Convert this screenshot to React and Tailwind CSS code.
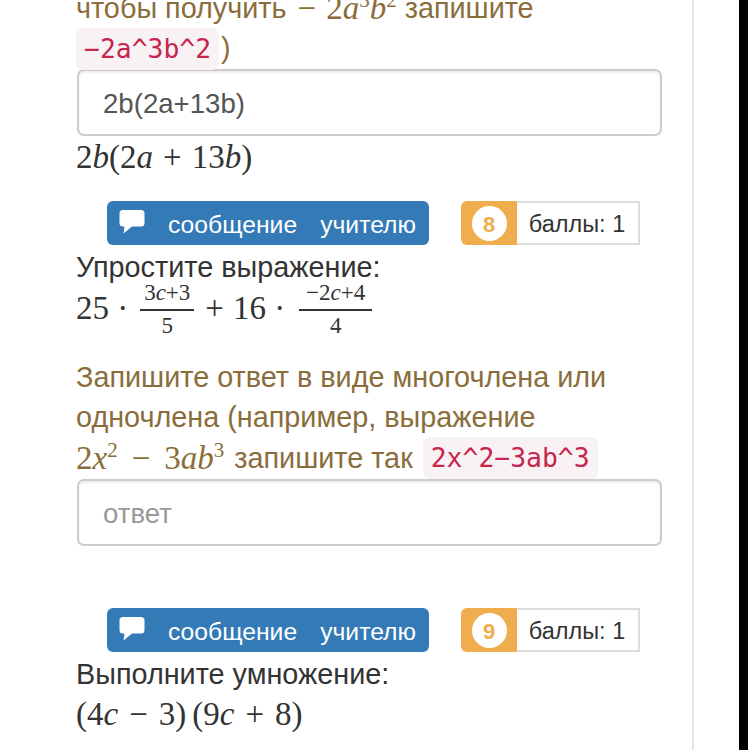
import React from "react";

const serif = "font-['Liberation_Serif',serif]";

const V = ({ children }) => <i className="italic">{children}</i>;

const Code = ({ children }) => (
  <code className="inline-block h-[42px] rounded-[7px] bg-[#f9f2f4] px-[8px] font-['DejaVu_Sans_Mono',monospace] text-[26.4px] leading-[42px] text-[#c7254e]">
    {children}
  </code>
);

const Sup = ({ children }) => (
  <sup className="relative -top-[12px] align-baseline text-[21px] leading-none">{children}</sup>
);

const Frac = ({ top, bottom, width, left }) => (
  <span className={`inline-flex flex-col items-center align-middle text-[23px] leading-[25px] ${width} ${left}`}>
    <span className="w-full whitespace-nowrap border-b-2 border-[#333] pb-[4px] text-center">{top}</span>
    <span className="pt-[2px] text-center">{bottom}</span>
  </span>
);

const AnswerInput = ({ value }) => (
  <input
    readOnly
    value={value}
    placeholder="ответ"
    className="ml-[1px] block h-[67px] w-[585px] rounded-[7px] border-2 border-[#ccc] bg-white px-[24px] pt-[3px] text-[27.6px] text-[#555] shadow-[inset_0_2px_2px_rgba(0,0,0,0.075)] outline-none placeholder:text-[#999]"
  />
);

const CommentIcon = () => (
  <svg width="26" height="24" viewBox="0 0 26 24" className="shrink-0">
    <path
      d="M4 0h18a3.5 3.5 0 0 1 3.5 3.5v9.5a3.5 3.5 0 0 1-3.5 3.5H13L4.5 23.5 5.5 16.5H4A3.5 3.5 0 0 1 .5 13V3.5A3.5 3.5 0 0 1 4 0z"
      fill="#fff"
    />
  </svg>
);

const ActionRow = ({ num }) => (
  <div className="flex h-[44px] pl-[31px]">
    <button className="flex h-[44px] w-[322px] items-start rounded-[6px] bg-[#337ab7] pl-[12px] pt-[9px] text-[#fff]">
      <CommentIcon />
      <span className="ml-[23px] whitespace-pre text-[24.7px] leading-[30px]">сообщение<span className="ml-[23px]">учителю</span></span>
    </button>
    <div className="ml-[32px] flex h-[44px] items-stretch">
      <div className="flex w-[56px] items-center justify-center rounded-l-[6px] bg-[#f0ad4e]">
        <span className="mt-[1px] flex h-[35px] w-[35px] items-center justify-center rounded-full bg-white pt-[1px] text-[22px] font-bold text-[#f0ad4e]">
          {num}
        </span>
      </div>
      <div className="flex w-[123px] items-center justify-center border-2 border-l-0 border-[#ddd] bg-white pr-[1px] pt-[3px] text-[23.5px] text-[#333]">
        баллы: 1
      </div>
    </div>
  </div>
);

export default function App() {
  return (
    <div className="flex h-[750px] w-[748px] overflow-hidden bg-white font-['Liberation_Sans',sans-serif] text-[28.8px] text-[#333]">
      <div className="h-full w-[694px] shrink-0 border-r-2 border-[#e4e4e4] pl-[76px]">
        <div className="-mt-[12px] leading-[40px] text-[#8a6d3b]">
          <div className="flex h-[40px] whitespace-pre">
            <span>чтобы получить </span>
            <span className={`${serif} text-[33px]`}>
              <span className="ml-[3px] mr-[10px]">−</span>2<V>a</V>
              <Sup>3</Sup>
              <V>b</V>
              <Sup>2</Sup>
            </span>
            <span> запишите</span>
          </div>
          <div className="flex h-[41px] items-start">
            <Code>−2a^3b^2</Code>
            <span className="ml-[2px]">)</span>
          </div>
        </div>
        <AnswerInput value="2b(2a+13b)" />
        <div className={`${serif} h-[43px] text-[33px] leading-[43px]`}>
          2<V>b</V>(2<V>a</V>
          <span className="mx-[10px]">+</span>13<V>b</V>)
        </div>
        <div className="mt-[22px]">
          <ActionRow num="8" />
        </div>
        <div className="h-[44px] leading-[44px]">Упростите выражение:</div>
        <div className={`${serif} -mt-[5px] flex h-[50px] items-center text-[33px] text-[#333]`}>
          25 ·
          <Frac
            width="w-[54px]"
            left="ml-[12px] mr-[11px]"
            top={
              <>
                3<V>c</V>+3
              </>
            }
            bottom="5"
          />
          <span className="mr-[9px]">+</span> 16 ·
          <Frac
            width="w-[73px]"
            left="ml-[14px]"
            top={
              <>
                −2<V>c</V>+4
              </>
            }
            bottom="4"
          />
        </div>
        <div className="mt-[23px] leading-[40px] text-[#8a6d3b]">
          <div className="h-[40px] whitespace-nowrap">Запишите ответ в виде многочлена или</div>
          <div className="h-[40px] whitespace-nowrap">одночлена (например, выражение</div>
          <div className="flex h-[42px] items-center whitespace-pre">
            <span className={`${serif} text-[33px]`}>
              2<V>x</V>
              <Sup>2</Sup>
              <span className="mx-[14px]">−</span>3<V>ab</V>
              <Sup>3</Sup>
            </span>
            <span className="ml-[10px] mr-[10px]">запишите так</span>
            <Code>2x^2−3ab^3</Code>
          </div>
        </div>
        <AnswerInput value="" />
        <div className="mt-[62px]">
          <ActionRow num="9" />
        </div>
        <div className="h-[44px] leading-[44px]">Выполните умножение:</div>
        <div className={`${serif} h-[36px] whitespace-pre text-[33px] leading-[36px]`}>
          (4<V>c</V>
          <span className="mx-[11px]">−</span>3)
          <span className="ml-[6px]">(</span>9<V>c</V>
          <span className="mx-[11px]">+</span>8)
        </div>
      </div>
      <div className="h-full w-[45px] shrink-0 bg-white" />
      <div className="h-full w-[9px] shrink-0 bg-black" />
    </div>
  );
}
